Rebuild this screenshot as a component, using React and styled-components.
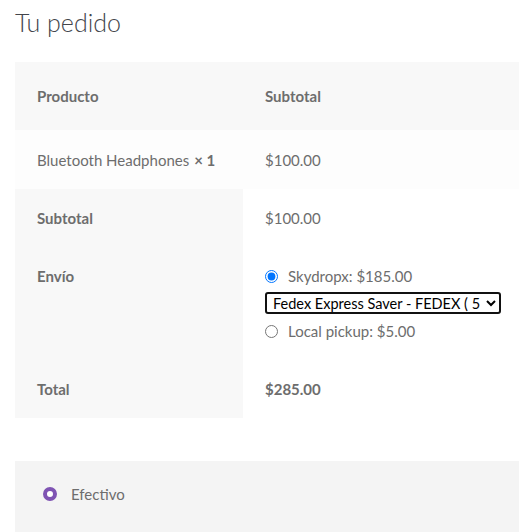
import React from "react";
import styled, { createGlobalStyle } from "styled-components";

const GlobalStyle = createGlobalStyle`
  html, body {
    margin: 0;
    padding: 0;
    overflow: hidden;
    background: #fff;
  }
  body {
    font-family: "Lato", "Open Sans", sans-serif;
    font-size: 15px;
    color: #6d6d6d;
  }
`;

const Wrapper = styled.div`
  width: 620px;
  padding: 0 15px;
`;

const Title = styled.h3`
  margin: 0;
  padding-top: 6px;
  font-size: 25px;
  font-weight: 300;
  line-height: 32px;
  color: #43454b;
`;

const Table = styled.table`
  width: 100%;
  margin-top: 24px;
  border-collapse: collapse;
  border-spacing: 0;
  table-layout: fixed;

  col.label {
    width: 228px;
  }
`;

const HeadCell = styled.th`
  text-align: left;
  font-weight: 700;
  line-height: 26px;
  padding: 21px 22px;
  background: #f8f8f8;
`;

const Cell = styled.td`
  text-align: left;
  line-height: 26px;
  padding: ${(p) => (p.$first ? "17px" : "16px")} 22px 16px;
  vertical-align: top;
  background: ${(p) => p.$bg || "transparent"};
  font-weight: ${(p) => (p.$bold ? 700 : 400)};
`;

const RowLabel = styled.th`
  text-align: left;
  font-weight: 700;
  line-height: 26px;
  padding: 16px 22px;
  vertical-align: top;
  background: #f8f8f8;
`;

const Qty = styled.strong`
  font-weight: 700;
  margin-left: 5px;
`;

const ShipList = styled.ul`
  list-style: none;
  margin: 0;
  padding: 0;
`;

const ShipItem = styled.li`
  display: flex;
  align-items: center;
  line-height: 26px;
  margin-top: ${(p) => (p.$gap ? "4px" : "0")};
`;

const Radio = styled.input`
  width: 13px;
  height: 13px;
  margin: 0 10px 0 0;
`;

const Select = styled.select`
  display: block;
  width: 236px;
  height: 22px;
  margin-top: 3px;
  font-family: "Lato", sans-serif;
  font-size: 14.5px;
  color: #000;
  border: 2px solid #111;
  border-radius: 3px;
  background: #fff;
  padding: 0 2px;
`;

const Spacer = styled.div`
  height: 43px;
`;

const Payment = styled.div`
  background: #f4f4f4;
  padding: 20px 28px 40px;
  min-height: 80px;
`;

const Method = styled.label`
  display: flex;
  align-items: center;
  gap: 14px;
  line-height: 26px;
`;

const Dot = styled.span`
  width: 14px;
  height: 14px;
  border-radius: 50%;
  box-sizing: border-box;
  border: 4px solid #7f54b3;
  background: #fff;
`;

export default function App() {
  return (
    <>
      <GlobalStyle />
      <Wrapper>
        <Title>Tu pedido</Title>
        <Table>
          <colgroup>
            <col className="label" />
            <col />
          </colgroup>
          <thead>
            <tr>
              <HeadCell>Producto</HeadCell>
              <HeadCell>Subtotal</HeadCell>
            </tr>
          </thead>
          <tbody>
            <tr>
              <Cell $bg="#fdfdfd" $first>
                Bluetooth Headphones<Qty>× 1</Qty>
              </Cell>
              <Cell $bg="#fdfdfd" $first>$100.00</Cell>
            </tr>
          </tbody>
          <tfoot>
            <tr>
              <RowLabel>Subtotal</RowLabel>
              <Cell>$100.00</Cell>
            </tr>
            <tr>
              <RowLabel>Envío</RowLabel>
              <Cell>
                <ShipList>
                  <ShipItem>
                    <Radio type="radio" name="ship" defaultChecked />
                    <span>Skydropx: $185.00</span>
                  </ShipItem>
                  <Select defaultValue="fedex">
                    <option value="fedex">Fedex Express Saver - FEDEX ( 5 días )</option>
                  </Select>
                  <ShipItem $gap>
                    <Radio type="radio" name="ship" />
                    <span>Local pickup: $5.00</span>
                  </ShipItem>
                </ShipList>
              </Cell>
            </tr>
            <tr>
              <RowLabel>Total</RowLabel>
              <Cell $bold>$285.00</Cell>
            </tr>
          </tfoot>
        </Table>
        <Spacer />
        <Payment>
          <Method>
            <Dot />
            <span>Efectivo</span>
          </Method>
        </Payment>
      </Wrapper>
    </>
  );
}
